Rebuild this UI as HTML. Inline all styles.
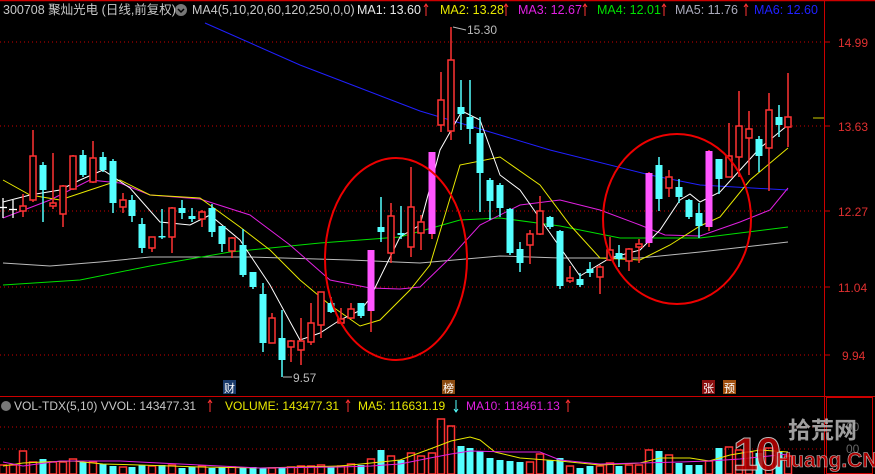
<!DOCTYPE html>
<html><head><meta charset="utf-8"><style>
html,body{margin:0;padding:0;background:#000;width:875px;height:474px;overflow:hidden}
svg{display:block}
text{font-family:"Liberation Sans","Noto Sans CJK SC",sans-serif}
</style></head><body>
<svg width="875" height="474" viewBox="0 0 875 474" xmlns="http://www.w3.org/2000/svg">
<rect width="875" height="474" fill="#000"/>
<line x1="0" y1="0.5" x2="875" y2="0.5" stroke="#c00" stroke-width="1.5"/>
<line x1="824.5" y1="0" x2="824.5" y2="474" stroke="#c00"/>
<line x1="0" y1="396.5" x2="875" y2="396.5" stroke="#c00"/>
<rect x="826.5" y="397.5" width="46" height="76" fill="none" stroke="#c00"/>
<g stroke="#c00" stroke-dasharray="1,3">
<line x1="0" y1="42" x2="824" y2="42"/><line x1="0" y1="126" x2="824" y2="126"/><line x1="0" y1="211" x2="824" y2="211"/><line x1="0" y1="287" x2="824" y2="287"/><line x1="0" y1="355" x2="824" y2="355"/>
<line x1="0" y1="427" x2="824" y2="427"/><line x1="0" y1="449" x2="824" y2="449"/>
</g>
<g stroke="#c00"><line x1="824" y1="42" x2="830" y2="42"/><line x1="824" y1="126" x2="830" y2="126"/><line x1="824" y1="211" x2="830" y2="211"/><line x1="824" y1="287" x2="830" y2="287"/><line x1="824" y1="355" x2="830" y2="355"/></g>
<line x1="813" y1="118" x2="824" y2="118" stroke="#cc0"/>
<g fill="#e03030" font-size="12"><text x="838" y="47">14.99</text><text x="838" y="131">13.63</text><text x="838" y="216">12.27</text><text x="838" y="292">11.04</text><text x="842" y="360">9.94</text></g>
<g fill="#666" font-size="12"><text x="846" y="431">00</text><text x="846" y="453">00</text></g>
<g fill="none" stroke-width="1">
<polyline stroke="#2020ff" points="205,23 300,65 420,111 550,150 650,175 700,185 788,190"/>
<polyline stroke="#bbb" points="3,263 50,266 100,262 150,257 250,257 350,260 420,263 500,256 560,258 640,258 700,252 788,242"/>
<polyline stroke="#00e000" points="3,285 80,280 150,266 230,252 320,243 400,237 460,220 500,218 560,226 620,238 700,238 740,233 788,227"/>
<polyline stroke="#e020e0" points="3,218 50,200 90,180 120,183 150,195 200,199 250,215 290,245 330,280 370,288 400,289 420,287 450,258 480,225 520,205 560,200 600,210 640,225 665,235 700,236 740,222 770,210 788,188"/>
<polyline stroke="#e8e800" points="3,180 30,195 60,200 90,190 120,180 150,195 200,198 240,227 270,250 300,280 330,305 360,326 380,320 410,290 430,265 460,165 500,157 540,185 570,225 600,258 640,260 670,245 700,226 720,217 750,180 788,148"/>
<polyline stroke="#fff" points="3,202 30,195 60,190 80,180 103,170 130,188 160,222 190,225 210,215 240,240 270,285 300,340 320,333 340,320 361,310 370,298 400,237 420,225 440,150 462,111 480,120 500,175 520,190 550,233 580,276 610,258 640,250 660,230 680,200 690,194 700,202 720,192 740,170 760,148 788,125"/>
</g>
<g stroke-width="1.3">
<g stroke="#fff"><line x1="3" y1="198" x2="3" y2="218"/><line x1="0" y1="207.5" x2="7" y2="207.5"/><line x1="13" y1="200" x2="13" y2="218"/><line x1="9" y1="209.5" x2="17" y2="209.5"/></g>
</g>
<g id="cand"></g>
<ellipse cx="396" cy="259" rx="71" ry="101" fill="none" stroke="#e00" stroke-width="2"/>
<ellipse cx="677" cy="219" rx="74" ry="85" fill="none" stroke="#e00" stroke-width="2"/>
<g fill="#bbb" font-size="12"><text x="467" y="34">15.30</text><text x="293" y="382">9.57</text></g>
<g stroke="#bbb" fill="none"><polyline points="453,27 466,30"/><polyline points="283,377 292,377"/></g>
<rect x="223" y="380" width="13" height="14" fill="#1a3a6a"/><text x="224" y="392" fill="#fff" font-size="11">财</text>
<rect x="442" y="380" width="13" height="14" fill="#8a4a10"/><text x="443" y="392" fill="#fff" font-size="11">榜</text>
<rect x="702" y="380" width="13" height="14" fill="#8a1010"/><text x="703" y="392" fill="#fff" font-size="11">张</text>
<rect x="723" y="380" width="13" height="14" fill="#a05010"/><text x="724" y="392" fill="#fff" font-size="11">预</text>
<text x="3" y="14" fill="#c8c8c8" font-size="12.5">300708 聚灿光电 (日线,前复权)</text>
<circle cx="181" cy="10" r="6" fill="#777"/><path d="M178 9 L181 12 L184 9" stroke="#000" fill="none" stroke-width="1.5"/>
<text x="192" y="14" fill="#c8c8c8" font-size="12.5">MA4(5,10,20,60,120,250,0,0)</text>
<text x="357" y="14" fill="#e8e8e8" font-size="12.5">MA1: 13.60</text>
<text x="440" y="14" fill="#e8e800" font-size="12.5">MA2: 13.28</text>
<text x="518" y="14" fill="#e020e0" font-size="12.5">MA3: 12.67</text>
<text x="597" y="14" fill="#00e000" font-size="12.5">MA4: 12.01</text>
<text x="675" y="14" fill="#aab" font-size="12.5">MA5: 11.76</text>
<text x="754" y="14" fill="#2020ff" font-size="12.5">MA6: 12.60</text>
<g stroke="#f33" fill="none"><path d="M426 4v12M424 7l2-3 2 3"/><path d="M506 4v12M504 7l2-3 2 3"/><path d="M585 4v12M583 7l2-3 2 3"/><path d="M664 4v12M662 7l2-3 2 3"/><path d="M746 4v12M744 7l2-3 2 3"/></g>
<circle cx="6" cy="406" r="5" fill="#777"/>
<text x="14" y="410" fill="#c8c8c8" font-size="12">VOL-TDX(5,10) VVOL: 143477.31</text>
<text x="225" y="410" fill="#e8e800" font-size="12">VOLUME: 143477.31</text>
<text x="358" y="410" fill="#e8e800" font-size="12">MA5: 116631.19</text>
<text x="466" y="410" fill="#e020e0" font-size="12">MA10: 118461.13</text>
<g stroke="#f33" fill="none"><path d="M210 400v12M208 403l2-3 2 3"/><path d="M348 400v12M346 403l2-3 2 3"/><path d="M568 400v12M566 403l2-3 2 3"/></g>
<path d="M456 400v12M454 409l2 3 2-3" stroke="#5ff" fill="none"/>
<g id="vol"></g>
<polyline fill="none" stroke="#e8e800" points="3,466 23,463 43,462 73,461 103,464 140,465 200,467 260,468 300,467 340,466 361,464 371,463 400,460 430,449 451,441 470,437 480,440 495,452 520,458 560,461 600,465 640,463 660,458 690,458 709,461 730,455 760,450 788,452"/>
<polyline fill="none" stroke="#e020e0" points="3,462 23,466 60,461 120,461 200,465 260,468 340,467 371,466 400,464 430,458 451,454 470,451 510,452 540,452 560,460 600,464 640,463 680,462 709,461 740,459 788,454"/>
<g opacity="0.85">
<text x="733" y="470" fill="#b00" stroke="#ddd" stroke-width="1" font-size="46" font-weight="bold" font-family="Liberation Sans,sans-serif" letter-spacing="-3">10</text>
<text x="788" y="438" fill="#bbb" font-size="23" font-weight="bold">拾荒网</text>
<text x="776" y="467" fill="#c00" stroke="#ddd" stroke-width="0.6" font-size="21" font-weight="bold">Huang.CN</text>
</g>
</svg>
<script>
var d=[[23,194,206,211,217,'R'],[33,130,156,200,202,'R'],[43,162,165,190,222,'C'],[53,153,203,206,209,'R'],[63,185,186,214,227,'R'],[73,155,156,189,190,'R'],[83,150,155,175,177,'C'],[93,141,158,182,183,'R'],[103,152,157,170,172,'C'],[113,159,161,203,213,'C'],[123,193,200,207,213,'R'],[132,195,200,216,222,'C'],[142,218,224,248,253,'C'],[152,237,237,248,252,'R'],[162,209,236,237,239,'C'],[172,207,208,237,253,'R'],[182,200,208,213,219,'C'],[192,208,216,219,222,'C'],[202,210,212,219,227,'R'],[212,204,208,232,237,'C'],[222,226,226,244,252,'C'],[232,237,238,251,258,'R'],[243,229,245,275,277,'C'],[253,272,272,287,289,'C'],[263,283,294,343,352,'C'],[272,313,318,343,343,'R'],[282,310,338,360,377,'C'],[291,340,341,347,362,'R'],[301,318,341,350,365,'R'],[311,303,323,342,345,'R'],[321,292,292,325,338,'R'],[331,297,303,312,313,'C'],[341,308,319,323,323,'R'],[351,303,309,318,319,'R'],[361,303,303,316,318,'C'],[371,250,250,311,332,'M'],[381,197,227,232,242,'C'],[391,203,216,253,263,'R'],[401,206,233,235,239,'C'],[411,167,207,247,257,'R'],[421,215,222,233,250,'R'],[432,152,152,234,239,'M'],[441,72,100,125,132,'R'],[451,27,60,131,140,'R'],[461,80,107,114,130,'C'],[470,80,117,129,144,'C'],[480,117,133,173,212,'C'],[490,178,180,201,220,'C'],[500,183,185,208,217,'C'],[510,208,209,253,255,'C'],[520,242,249,263,272,'C'],[530,230,234,245,264,'R'],[540,196,211,234,235,'R'],[550,216,217,227,229,'C'],[560,230,231,286,289,'C'],[570,266,278,281,283,'R'],[580,273,279,285,287,'C'],[590,262,269,273,277,'C'],[600,265,267,277,294,'R'],[610,237,250,260,261,'R'],[619,245,253,259,267,'C'],[629,248,249,261,271,'R'],[639,239,244,247,263,'R'],[649,172,173,243,247,'M'],[659,157,165,199,211,'C'],[669,170,177,188,197,'R'],[679,179,187,197,203,'C'],[689,199,200,217,219,'C'],[699,203,213,226,238,'C'],[709,150,151,227,231,'M'],[719,159,159,179,194,'C'],[729,123,156,177,177,'R'],[739,91,126,157,177,'R'],[749,111,129,138,175,'R'],[759,136,139,156,172,'C'],[769,93,110,148,191,'R'],[779,105,117,125,137,'C'],[788,73,117,127,147,'R']];
var v={3:465,13:465,23:451,33:462,43:459,53:462,63:462,73:459,83:462,93:462,103:464,113:466,123:467,132:467,142:465,152:466,162:465,172:465,182:468,192:467,202:466,212:468,222:467,232:467,243:467,253:467,263:468,272:468,282:467,291:467,301:466,311:466,321:465,331:467,341:466,351:464,361:465,371:459,381:450,391:456,401:460,411:453,421:456,432:453,441:419,451:426,461:446,470:448,480:451,490:458,500:460,510:461,520:462,530:462,540:454,550:460,560:458,570:466,580:468,590:466,600:466,610:463,619:466,629:465,639:465,649:450,659:451,669:455,679:463,689:465,699:465,709:461,719:448,729:447,739:450,749:452,759:453,769:448,779:452,788:456};
var ns='http://www.w3.org/2000/svg',g=document.getElementById('cand'),gv=document.getElementById('vol');
function el(p,t,a){var e=document.createElementNS(ns,t);for(var k in a)e.setAttribute(k,a[k]);p.appendChild(e);}
var col={R:'#ff3232',C:'#54ffff',M:'#ff55ff'};
d.forEach(function(c){var x=c[0],t=c[5],cl=col[t];
el(g,'line',{x1:x,x2:x,y1:c[1],y2:c[4],stroke:t=='M'?'#ff3232':cl,'stroke-width':1.5});
var h=Math.max(c[3]-c[2],1.5);
if(t=='R')el(g,'rect',{x:x-3,y:c[2],width:6,height:h,fill:'#000',stroke:cl,'stroke-width':1.5});
else el(g,'rect',{x:x-3.5,y:c[2],width:7,height:h,fill:cl});
var vt=v[x];if(vt){var vc=t=='C'?'C':'R';
if(vc=='R')el(gv,'rect',{x:x-3.5,y:vt,width:7,height:474-vt,fill:'none',stroke:'#ff3232','stroke-width':1.5});
else el(gv,'rect',{x:x-3.5,y:vt,width:7,height:474-vt,fill:'#54ffff'});}
});
[3,13].forEach(function(x){el(gv,'rect',{x:x-3.5,y:v[x],width:7,height:474-v[x],fill:'none',stroke:'#ff3232','stroke-width':1.5});});
</script>
</body></html>
